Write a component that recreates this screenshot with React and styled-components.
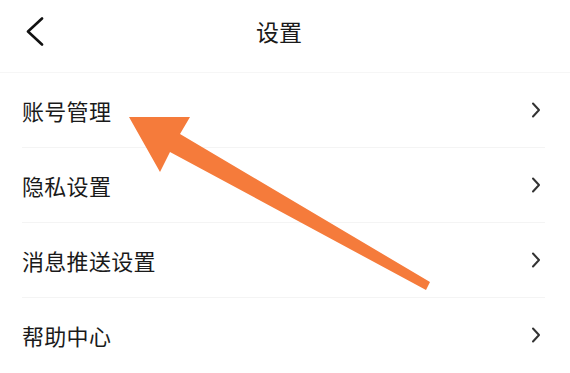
import React from 'react';
import styled, { createGlobalStyle } from 'styled-components';

const GlobalStyle = createGlobalStyle`
  html, body {
    margin: 0;
    padding: 0;
    background: #fff;
  }
  body {
    font-family: "Noto Sans CJK SC", "Noto Sans", sans-serif;
    color: #1c1c1c;
  }
`;

const Page = styled.div`
  position: relative;
  width: 570px;
  height: 373px;
  overflow: hidden;
  background: #fff;
`;

const Header = styled.header`
  display: grid;
  grid-template-columns: 1fr auto 1fr;
  align-items: center;
  height: 73px;
  padding: 0 25px 9px;
  box-sizing: border-box;
  border-bottom: 1px solid #f6f6f6;
`;

const BackButton = styled.button`
  justify-self: start;
  display: flex;
  align-items: center;
  padding: 0;
  border: 0;
  background: none;
  cursor: pointer;
`;

const Title = styled.h1`
  margin: 0 12px 0 0;
  font-size: 23px;
  font-weight: 400;
  line-height: 1;
  color: #1a1a1a;
`;

const List = styled.ul`
  list-style: none;
  margin: 0 25px 0 22px;
  padding: 0;
`;

const Row = styled.li`
  display: flex;
  align-items: center;
  justify-content: space-between;
  height: 74px;
  border-bottom: ${props => (props.last ? 'none' : '1px solid #f4f4f4')};
  cursor: pointer;
`;

const Label = styled.span`
  font-size: 22px;
  line-height: 1;
  letter-spacing: 0.3px;
  color: #1a1a1a;
`;

const Chevron = styled.svg`
  width: 10px;
  height: 16px;
  margin-right: 4px;
`;

const Overlay = styled.svg`
  position: absolute;
  left: 0;
  top: 0;
  pointer-events: none;
`;

const items = ['账号管理', '隐私设置', '消息推送设置', '帮助中心'];

export default function App() {
  return (
    <Page>
      <GlobalStyle />
      <Header>
        <BackButton aria-label="返回">
          <svg width="20" height="30" viewBox="0 0 20 30">
            <path
              d="M17 1.5 L3 14.5 L17 27.5"
              fill="none"
              stroke="#111"
              strokeWidth="2.6"
              strokeLinecap="round"
              strokeLinejoin="round"
            />
          </svg>
        </BackButton>
        <Title>设置</Title>
        <div />
      </Header>
      <List>
        {items.map((item, i) => (
          <Row key={item} last={i === items.length - 1}>
            <Label>{item}</Label>
            <Chevron viewBox="0 0 10 16">
              <path
                d="M2 1.5 L8 8 L2 14.5"
                fill="none"
                stroke="#333"
                strokeWidth="2"
                strokeLinecap="round"
                strokeLinejoin="round"
              />
            </Chevron>
          </Row>
        ))}
      </List>
      <Overlay width="570" height="373" viewBox="0 0 570 373">
        <polygon
          points="129,117 190,117 180,134 430,282 426,290 170,152 160,172"
          fill="#f57b3b"
        />
      </Overlay>
    </Page>
  );
}
